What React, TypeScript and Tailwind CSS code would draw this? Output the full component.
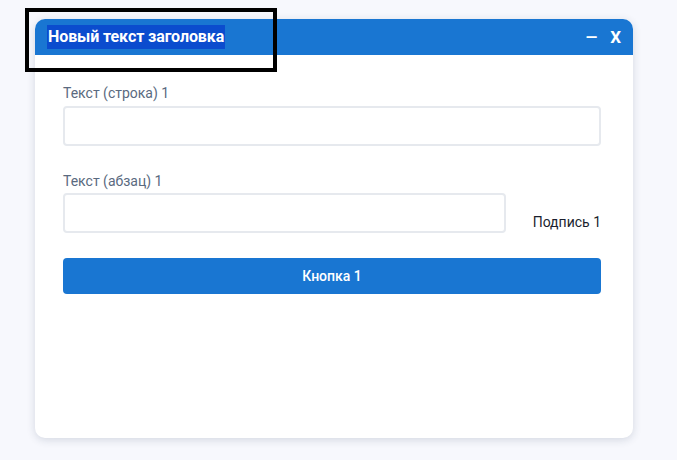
export default function App() {
  return (
    <div className="relative min-h-[460px] w-full bg-[#f7f8fd] pt-[19px] pl-[35px] font-['Roboto',sans-serif]">
      <div className="flex h-[419px] w-[598px] flex-col overflow-hidden rounded-[10px] bg-white shadow-[0_2px_8px_rgba(30,50,80,0.16)]">
        {/* Header */}
        <div className="flex h-[36px] shrink-0 items-center justify-between bg-[#1976d2] pl-3 pr-3">
          <span className="bg-[#0b4cce] px-[1px] py-[1px] text-[16px] font-bold leading-[22px] tracking-[-0.1px] text-white">
            Новый текст заголовка
          </span>
          <div className="flex items-center gap-[13px] text-white">
            <span className="text-[15px] font-bold leading-none">&mdash;</span>
            <span className="text-[17px] font-bold leading-none">X</span>
          </div>
        </div>

        {/* Body */}
        <div className="flex flex-col pl-[28px] pr-[32px] pt-[28px]">
          <label className="text-[14px] leading-[20px] text-[#5a6a80]">Текст (строка) 1</label>
          <input className="mt-[3px] h-[40px] w-full rounded-[4px] border-2 border-[#e6e9ee] outline-none" />

          <label className="mt-[25px] text-[14px] leading-[20px] text-[#5a6a80]">Текст (абзац) 1</label>
          <div className="mt-[2px] flex items-end">
            <input className="h-[40px] w-[443px] rounded-[4px] border-2 border-[#e6e9ee] outline-none" />
            <span className="mb-[1px] ml-auto text-[14px] leading-[20px] text-[#1b1f2e]">Подпись 1</span>
          </div>

          <button className="mt-[25px] h-[36px] w-full rounded-[4px] bg-[#1976d2] text-[14px] font-medium text-white">
            Кнопка 1
          </button>
        </div>
      </div>

      {/* selection outline */}
      <div className="pointer-events-none absolute left-[25px] top-[8px] h-[64px] w-[252px] border-4 border-black" />
    </div>
  );
}
